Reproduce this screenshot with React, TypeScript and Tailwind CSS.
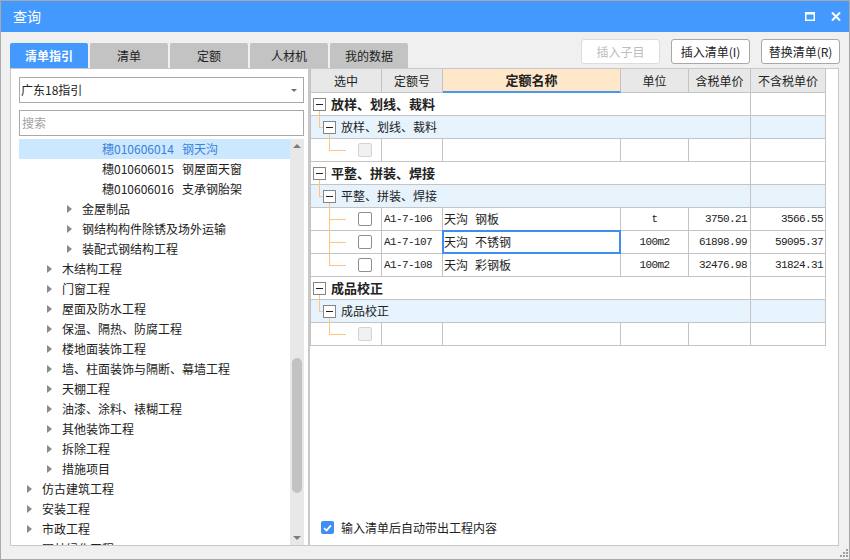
import React from 'react';

type TreeItem = { level: number; text: string; code?: string; selected?: boolean };

const tree: TreeItem[] = [
  { level: 3, code: '穗010606014', text: '钢天沟', selected: true },
  { level: 3, code: '穗010606015', text: '钢屋面天窗' },
  { level: 3, code: '穗010606016', text: '支承钢胎架' },
  { level: 2, text: '金屋制品' },
  { level: 2, text: '钢结构构件除锈及场外运输' },
  { level: 2, text: '装配式钢结构工程' },
  { level: 1, text: '木结构工程' },
  { level: 1, text: '门窗工程' },
  { level: 1, text: '屋面及防水工程' },
  { level: 1, text: '保温、隔热、防腐工程' },
  { level: 1, text: '楼地面装饰工程' },
  { level: 1, text: '墙、柱面装饰与隔断、幕墙工程' },
  { level: 1, text: '天棚工程' },
  { level: 1, text: '油漆、涂料、裱糊工程' },
  { level: 1, text: '其他装饰工程' },
  { level: 1, text: '拆除工程' },
  { level: 1, text: '措施项目' },
  { level: 0, text: '仿古建筑工程' },
  { level: 0, text: '安装工程' },
  { level: 0, text: '市政工程' },
  { level: 0, text: '园林绿化工程' },
];

const indent = ['pl-[8px]', 'pl-[28px]', 'pl-[48px]', 'pl-[68px]'];

type Row =
  | { kind: 'group'; text: string }
  | { kind: 'sub'; text: string }
  | { kind: 'empty' }
  | {
      kind: 'item';
      code: string;
      a: string;
      b: string;
      unit: string;
      tax: string;
      notax: string;
      last?: boolean;
      selected?: boolean;
    };

const rows: Row[] = [
  { kind: 'group', text: '放样、划线、裁料' },
  { kind: 'sub', text: '放样、划线、裁料' },
  { kind: 'empty' },
  { kind: 'group', text: '平整、拼装、焊接' },
  { kind: 'sub', text: '平整、拼装、焊接' },
  { kind: 'item', code: 'A1-7-106', a: '天沟', b: '钢板', unit: 't', tax: '3750.21', notax: '3566.55' },
  { kind: 'item', code: 'A1-7-107', a: '天沟', b: '不锈钢', unit: '100m2', tax: '61898.99', notax: '59095.37', selected: true },
  { kind: 'item', code: 'A1-7-108', a: '天沟', b: '彩钢板', unit: '100m2', tax: '32476.98', notax: '31824.31', last: true },
  { kind: 'group', text: '成品校正' },
  { kind: 'sub', text: '成品校正' },
  { kind: 'empty' },
];

const line = 'bg-[#fdc67c]';
const cell = 'h-[23px] border-r border-b border-[#c4c4c4] flex items-center shrink-0';
const mono = "font-['Liberation_Mono',monospace] text-[11px] tracking-[-0.6px]";

const MinusBox = () => (
  <span className="w-[13px] h-[13px] border border-[#858585] bg-white flex items-center justify-center shrink-0">
    <span className="w-[7px] h-px bg-[#222]" />
  </span>
);

const Check = ({ disabled }: { disabled?: boolean }) => (
  <span
    className={
      disabled
        ? 'w-[14px] h-[14px] rounded-[2px] border border-[#d4d4d4] bg-[#f1f1f1]'
        : 'w-[14px] h-[14px] rounded-[2px] border border-[#8e8e8e] bg-white'
    }
  />
);

function TableRow({ row }: { row: Row }) {
  if (row.kind === 'group' || row.kind === 'sub') {
    const sub = row.kind === 'sub';
    const bg = sub ? 'bg-[#e6f3fd]' : 'bg-white';
    return (
      <div className={`flex ${bg}`}>
        <div className={`${cell} w-[440px] relative ${sub ? 'pl-[12px]' : 'pl-[2px]'}`}>
          {sub && (
            <>
              <span className={`absolute left-[8px] top-0 h-[12px] w-px ${line}`} />
              <span className={`absolute left-[8px] top-[11px] w-[4px] h-px ${line}`} />
              <span className={`absolute left-[18px] top-[18px] bottom-[-1px] w-px ${line}`} />
            </>
          )}
          {!sub && <span className={`absolute left-[8px] top-[18px] bottom-[-1px] w-px ${line}`} />}
          <MinusBox />
          <span className={sub ? 'ml-[5px] text-[12px]' : 'ml-[5px] text-[13px] font-bold'}>{row.text}</span>
        </div>
        <div className={`${cell} w-[75px]`} />
      </div>
    );
  }
  const last = row.kind === 'empty' || row.last;
  return (
    <div className="flex bg-white">
      <div className={`${cell} w-[71px] relative pl-[47px]`}>
        <span className={`absolute left-[18px] top-0 w-px ${last ? 'h-[12px]' : 'bottom-[-1px]'} ${line}`} />
        <span className={`absolute left-[18px] top-[11px] w-[17px] h-px ${line}`} />
        <Check disabled={row.kind === 'empty'} />
      </div>
      {row.kind === 'empty' ? (
        <>
          <div className={`${cell} w-[61px]`} />
          <div className={`${cell} w-[178px]`} />
          <div className={`${cell} w-[68px]`} />
          <div className={`${cell} w-[62px]`} />
          <div className={`${cell} w-[75px]`} />
        </>
      ) : (
        <>
          <div className={`${cell} w-[61px] pl-[2px] ${mono}`}>{row.code}</div>
          <div className={`${cell} w-[178px] pl-[1px] relative text-[12px]`}>
            {row.selected && <span className="absolute inset-[-1px] border-2 border-[#3d8ef0]" />}
            <span>{row.a}</span>
            <span className="ml-[7px]">{row.b}</span>
          </div>
          <div className={`${cell} w-[68px] justify-center ${mono}`}>{row.unit}</div>
          <div className={`${cell} w-[62px] justify-end pr-[3px] ${mono}`}>{row.tax}</div>
          <div className={`${cell} w-[75px] justify-end pr-[2px] ${mono}`}>{row.notax}</div>
        </>
      )}
    </div>
  );
}

function LeftPanel() {
  return (
    <div className="w-[299px] h-full border border-[#c8c8c8] bg-white flex flex-col pl-[8px] pr-[4px] pt-[8px] shrink-0">
      <div className="h-[26px] border border-[#a9a9a9] flex items-center justify-between pl-[1px] pr-[6px] shrink-0">
        <span className="text-[12px]">广东18指引</span>
        <span className="w-0 h-0 border-x-[3px] border-x-transparent border-t-[3px] border-t-[#6f6f6f]" />
      </div>
      <div className="mt-[7px] h-[26px] border border-[#a9a9a9] flex items-center pl-[2px] shrink-0">
        <span className="text-[12px] text-[#a3a3a3]">搜索</span>
      </div>
      <div className="mt-[3px] flex-1 flex min-h-0">
        <div className="flex-1 overflow-hidden">
          {tree.map((t, i) => (
            <div
              key={i}
              className={`h-[20px] flex items-center ${indent[t.level]} ${t.selected ? 'bg-[#cce8ff] text-[#3b80d9]' : ''}`}
            >
              <span className="w-[15px] shrink-0 flex items-center">
                {!t.code && (
                  <span className="w-0 h-0 border-y-[4px] border-y-transparent border-l-[5px] border-l-[#8a8a8a]" />
                )}
              </span>
              {t.code && <span className="mr-[8px]">{t.code}</span>}
              <span className="whitespace-nowrap">{t.text}</span>
            </div>
          ))}
        </div>
        <div className="w-[14px] bg-[#e8e8e8] flex flex-col shrink-0">
          <div className="h-[14px] flex items-center justify-center shrink-0">
            <span className="w-0 h-0 border-x-[4px] border-x-transparent border-b-[4px] border-b-[#7d7d7d]" />
          </div>
          <div className="h-[205px] shrink-0" />
          <div className="h-[135px] w-[10px] ml-[2px] rounded-full bg-[#c2c2c2] shrink-0" />
          <div className="flex-1" />
          <div className="h-[14px] flex items-center justify-center shrink-0">
            <span className="w-0 h-0 border-x-[4px] border-x-transparent border-t-[4px] border-t-[#7d7d7d]" />
          </div>
        </div>
      </div>
    </div>
  );
}

function RightPanel() {
  const head = 'h-[24px] border-r border-b border-[#c4c4c4] bg-[#e8e8e8] flex items-center justify-center shrink-0 text-[12px]';
  return (
    <div className="w-[530px] h-full border border-[#c8c8c8] bg-white flex flex-col shrink-0">
      <div className="border-l border-[#c4c4c4] w-[516px]">
        <div className="flex">
          <div className={`${head} w-[71px]`}>选中</div>
          <div className={`${head} w-[61px]`}>定额号</div>
          <div className="h-[24px] w-[178px] border-r border-[#c4c4c4] border-b-2 border-b-[#4a97ee] bg-[#ffe8c9] flex items-center justify-center shrink-0 text-[13px] font-bold">
            定额名称
          </div>
          <div className={`${head} w-[68px]`}>单位</div>
          <div className={`${head} w-[62px]`}>含税单价</div>
          <div className={`${head} w-[75px]`}>不含税单价</div>
        </div>
        {rows.map((r, i) => (
          <TableRow key={i} row={r} />
        ))}
      </div>
      <div className="flex-1" />
      <div className="flex items-center pl-[11px] mb-[11px] h-[13px]">
        <span className="w-[13px] h-[13px] rounded-[2px] bg-[#3f8ef4] flex items-center justify-center">
          <svg width="9" height="8" viewBox="0 0 9 8">
            <path d="M1 4.2 L3.5 6.5 L8 1.3" fill="none" stroke="white" strokeWidth="1.8" />
          </svg>
        </span>
        <span className="ml-[7px] text-[12px]">输入清单后自动带出工程内容</span>
      </div>
    </div>
  );
}

export default function App() {
  const tabs = ['清单指引', '清单', '定额', '人材机', '我的数据'];
  return (
    <div className="w-[850px] h-[560px] border border-[#a9a9a9] bg-[#f0f0f0] flex flex-col relative overflow-hidden font-['Noto_Sans_CJK_SC','Noto_Sans',sans-serif] text-[12px] text-[#222]">
      <div className="h-[31px] bg-[#4499ff] flex items-center pl-[12px] pr-[8px] shrink-0">
        <span className="text-white text-[14px]">查询</span>
        <div className="ml-auto flex items-center gap-[16px]">
          <svg width="10" height="9" viewBox="0 0 10 9">
            <rect x="0.75" y="1" width="8.5" height="7.25" fill="none" stroke="white" strokeWidth="1.5" />
            <rect x="0" y="0" width="10" height="2.5" fill="white" />
          </svg>
          <svg width="10" height="9" viewBox="0 0 10 9">
            <path d="M1 0.5 L9 8.5 M9 0.5 L1 8.5" stroke="white" strokeWidth="2" />
          </svg>
        </div>
      </div>
      <div className="h-[36px] flex items-start pl-[9px] pr-[9px] shrink-0">
        <div className="mt-[11px] flex gap-[2px]">
          {tabs.map((t, i) => (
            <div
              key={t}
              className={`w-[78px] h-[25px] rounded-t-[2px] flex items-center justify-center text-[12px] ${
                i === 0 ? 'bg-[#4499ff] text-white font-bold' : 'bg-[#c3c3c3] text-[#222]'
              }`}
            >
              {t}
            </div>
          ))}
        </div>
        <div className="ml-auto mt-[7px] flex gap-[11px]">
          <div className="w-[79px] h-[25px] border border-[#dcdcdc] rounded-[3px] bg-white flex items-center justify-center text-[#bdbdbd]">
            插入子目
          </div>
          <div className="w-[79px] h-[25px] border border-[#a8a8a8] rounded-[3px] bg-white flex items-center justify-center">
            插入清单(I)
          </div>
          <div className="w-[79px] h-[25px] border border-[#a8a8a8] rounded-[3px] bg-white flex items-center justify-center">
            替换清单(R)
          </div>
        </div>
      </div>
      <div className="flex h-[478px] pl-[9px] shrink-0">
        <LeftPanel />
        <RightPanel />
      </div>
      <svg className="absolute right-[1px] bottom-[2px]" width="9" height="9" viewBox="0 0 9 9">
        <rect x="7" y="1" width="2" height="2" fill="#a0a0a0" />
        <rect x="4" y="4" width="2" height="2" fill="#a0a0a0" />
        <rect x="7" y="4" width="2" height="2" fill="#a0a0a0" />
        <rect x="1" y="7" width="2" height="2" fill="#a0a0a0" />
        <rect x="4" y="7" width="2" height="2" fill="#a0a0a0" />
        <rect x="7" y="7" width="2" height="2" fill="#a0a0a0" />
      </svg>
    </div>
  );
}
